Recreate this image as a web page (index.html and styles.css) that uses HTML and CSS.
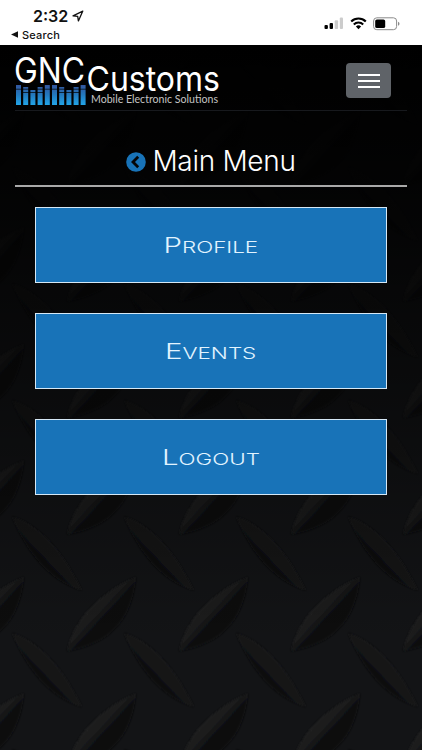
FILE: index.html
```
<!DOCTYPE html>
<html lang="en">

<head>
  <meta charset="UTF-8">
  <meta name="viewport" content="width=device-width, initial-scale=1">
  <title>GNC Customs - Main Menu</title>
  <link rel="stylesheet" href="styles.css">
</head>

<body>
  <div class="status-bar">
    <div class="status-left">
      <div class="status-time">
        <span>2:32</span>
        <svg width="12" height="12" viewBox="0 0 12 12">
          <path d="M1 5.8 L10.8 1.1 L6.4 10.9 L5.7 6.3 Z" fill="none" stroke="#111" stroke-width="1.3" stroke-linejoin="round" />
        </svg>
      </div>
      <div class="status-back">
        <svg width="7" height="7" viewBox="0 0 7 7"><path d="M0 3.5 L7 0.3 V6.7 Z" fill="#111" /></svg>
        <span>Search</span>
      </div>
    </div>
    <div class="status-right">
      <svg width="20" height="13" viewBox="0 0 20 13">
        <rect x="0.5" y="8" width="3.4" height="4" rx="1" />
        <rect x="5.6" y="6" width="3.4" height="6" rx="1" />
        <rect x="10.7" y="3.2" width="3.4" height="8.8" rx="1" fill="#ccc" />
        <rect x="15.8" y="0.5" width="3.2" height="11.5" rx="1" fill="#ccc" />
      </svg>
      <svg width="17" height="13" viewBox="0 0 17 13">
        <path d="M1.2 4.5 A10.4 10.4 0 0 1 15.8 4.5" fill="none" stroke="#000" stroke-width="2.2" />
        <path d="M3.8 7.4 A6.7 6.7 0 0 1 13.2 7.4" fill="none" stroke="#000" stroke-width="2.1" />
        <path d="M8.5 12.3 L5.9 9.5 A3.7 3.7 0 0 1 11.1 9.5 Z" />
      </svg>
      <svg width="27" height="14" viewBox="0 0 27 14">
        <rect x="0.6" y="0.8" width="23" height="11.9" rx="3.2" fill="none" stroke="#8b8b8b" />
        <rect x="2.2" y="2.4" width="10" height="8.7" rx="1.7" />
        <path d="M25 4.8 Q26.5 5.4 26.5 6.8 Q26.5 8.2 25 8.8 Z" fill="#8b8b8b" />
      </svg>
    </div>
  </div>

  <div class="page">
    <svg class="plate" width="422" height="705" viewBox="0 45 422 705">
      <defs>
        <linearGradient id="riseLight" x1="0.3" y1="0.3" x2="0.72" y2="0.72">
          <stop offset="0" stop-color="#232323" />
          <stop offset="0.35" stop-color="#1e1e1e" />
          <stop offset="0.6" stop-color="#0c0d0f" />
          <stop offset="0.8" stop-color="#0b0c0e" />
          <stop offset="1" stop-color="#111214" />
        </linearGradient>
        <linearGradient id="fallLight" x1="0.66" y1="0.34" x2="0.36" y2="0.64">
          <stop offset="0" stop-color="#1b1b1c" />
          <stop offset="0.5" stop-color="#161617" />
          <stop offset="1" stop-color="#090a0b" />
        </linearGradient>
        <linearGradient id="shade" x1="0" y1="0" x2="0" y2="1">
          <stop offset="0" stop-color="#000" stop-opacity="1" />
          <stop offset="0.2" stop-color="#000" stop-opacity="0.84" />
          <stop offset="0.6" stop-color="#000" stop-opacity="0.32" />
          <stop offset="0.85" stop-color="#000" stop-opacity="0" />
        </linearGradient>
        <filter id="soft" x="-10%" y="-10%" width="120%" height="120%"><feGaussianBlur stdDeviation="0.8" /></filter>
        <!-- one repeat of the tread plate -->
        <pattern id="tread" x="0" y="562" width="112" height="116.5" patternUnits="userSpaceOnUse">
          <g filter="url(#soft)">
            <path d="M67 89 C74 55 104 28 136 15 C132 60 108 82 67 89 Z" fill="url(#riseLight)" />
            <path d="M-45 89 C-38 55 -8 28 24 15 C20 60 -4 82 -45 89 Z" fill="url(#riseLight)" />
            <path d="M12 71 C42 80 66 112 82 145 C50 135 28 110 12 71 Z" fill="url(#fallLight)" />
            <path d="M12 -45.5 C42 -36.5 66 -4.5 82 28.5 C50 18.5 28 -6.5 12 -45.5 Z" fill="url(#fallLight)" />
          </g>
        </pattern>
      </defs>
      <rect y="45" width="422" height="705" fill="#131416" />
      <rect y="45" width="422" height="705" fill="url(#tread)" />
      <rect y="45" width="422" height="705" fill="url(#shade)" />
    </svg>

    <div class="content">
      <div class="navbar">
        <svg class="logo" width="206" height="52" viewBox="0 0 206 52">
          <defs>
            <linearGradient id="eq" x1="0" y1="28" x2="0" y2="49" gradientUnits="userSpaceOnUse">
              <stop offset="0" stop-color="#35529b" />
              <stop offset="0.5" stop-color="#2378bd" />
              <stop offset="1" stop-color="#22a5e8" />
            </linearGradient>
          </defs>
          <text class="logo-main" x="-2" y="27" font-size="36" textLength="71" lengthAdjust="spacingAndGlyphs">GNC</text>
          <text class="logo-main" x="70.5" y="35" font-size="34.5" textLength="133.5" lengthAdjust="spacingAndGlyphs">Customs</text>
          <text class="logo-sub" x="75" y="47" font-size="10.5" textLength="127" lengthAdjust="spacingAndGlyphs">Mobile Electronic Solutions</text>
          <path fill="url(#eq)" d="M0 29h5v20h-5z M7.2 31h5v18h-5z M14.4 34h5v15h-5z M21.6 31h5v18h-5z M28.8 29h5v20h-5z M36 29h5v20h-5z M43.2 31h5v18h-5z M50.4 34h5v15h-5z M57.6 31h5v18h-5z M64.6 29h5v20h-5z" />
          <path stroke="#000" stroke-width="0.7" d="M0 33.2h70 M7 36.5h20 M43 36.5h20" />
        </svg>
        <button class="nav-toggle" type="button" aria-label="Menu">
          <span></span>
          <span></span>
          <span></span>
        </button>
      </div>

      <h1 class="page-title">
        <svg width="20" height="20" viewBox="0 0 20 20">
          <circle cx="10" cy="10" r="9.8" fill="#1873b8" />
          <path d="M12.2 4.8 L7 10 L12.2 15.2" fill="none" stroke="#050607" stroke-width="2.8" />
        </svg>
        <span>Main Menu</span>
      </h1>

      <div class="menu">
        <a class="menu-item" href="#"><span>Profile</span></a>
        <a class="menu-item" href="#"><span>Events</span></a>
        <a class="menu-item" href="#"><span>Logout</span></a>
      </div>
    </div>
  </div>
</body>

</html>
```
FILE: styles.css
```
* {
  box-sizing: border-box;
}

body {
  margin: 0;
  height: 750px;
  overflow: hidden;
  background: #000;
  color: #fff;
  font-family: Inter, "Liberation Sans", sans-serif;
}

svg {
  display: block;
}

.status-bar {
  display: flex;
  justify-content: space-between;
  height: 45px;
  padding: 6px 22px 0 11px;
  background: #fff;
  color: #111;
}

.status-time {
  display: flex;
  align-items: center;
  gap: 4px;
  height: 20px;
  padding-left: 22px;
  font-size: 16px;
  font-weight: 600;
}

.status-back {
  display: flex;
  align-items: center;
  gap: 4px;
  height: 17px;
  font-size: 11px;
  font-weight: 500;
  letter-spacing: 0.2px;
}

.status-right {
  display: flex;
  gap: 6px;
  padding-top: 11px;
}

.page {
  position: relative;
  height: 705px;
}

/* tread plate behind the whole page */
.plate {
  position: absolute;
  top: 0;
  left: 0;
}

.content {
  position: relative;
  padding: 0 15px;
}

.navbar {
  display: flex;
  justify-content: space-between;
  align-items: flex-start;
  height: 66px;
  padding: 11px 16px 0 1px;
  border-bottom: 1px solid #17191d;
}

.logo {
  overflow: visible;
}

.logo-main {
  font-family: Inter, sans-serif;
  font-weight: 400;
  fill: #fff;
}

.logo-sub {
  font-family: Lato, sans-serif;
  font-weight: 400;
  fill: #c4c4c4;
}

.nav-toggle {
  display: flex;
  flex-direction: column;
  align-items: center;
  justify-content: center;
  gap: 4px;
  width: 45px;
  height: 35px;
  margin-top: 7px;
  padding: 0;
  border: 0;
  border-radius: 4px;
  background: #5f6368;
}

.nav-toggle span {
  width: 22px;
  height: 2px;
  background: #fff;
}

.page-title {
  display: flex;
  align-items: center;
  justify-content: center;
  gap: 6px;
  height: 76px;
  margin: 0;
  padding-top: 25px;
  border-bottom: 2px solid #a9a9a9;
  font-size: 28px;
  font-weight: 300;
  letter-spacing: -0.3px;
}

.page-title svg {
  margin-top: 3px;
}

.menu {
  display: flex;
  flex-direction: column;
  gap: 30px;
  padding: 20px 20px 0;
}

.menu-item {
  display: flex;
  align-items: center;
  justify-content: center;
  height: 76px;
  border: 1px solid #d5e8f6;
  background: #1873b8;
  color: #e2f4ff;
  font-size: 16px;
  font-weight: 300;
  text-decoration: none;
  text-transform: uppercase;
}

.menu-item span {
  transform: scaleX(1.4);
}

.menu-item span::first-letter {
  font-size: 21px;
}
```
